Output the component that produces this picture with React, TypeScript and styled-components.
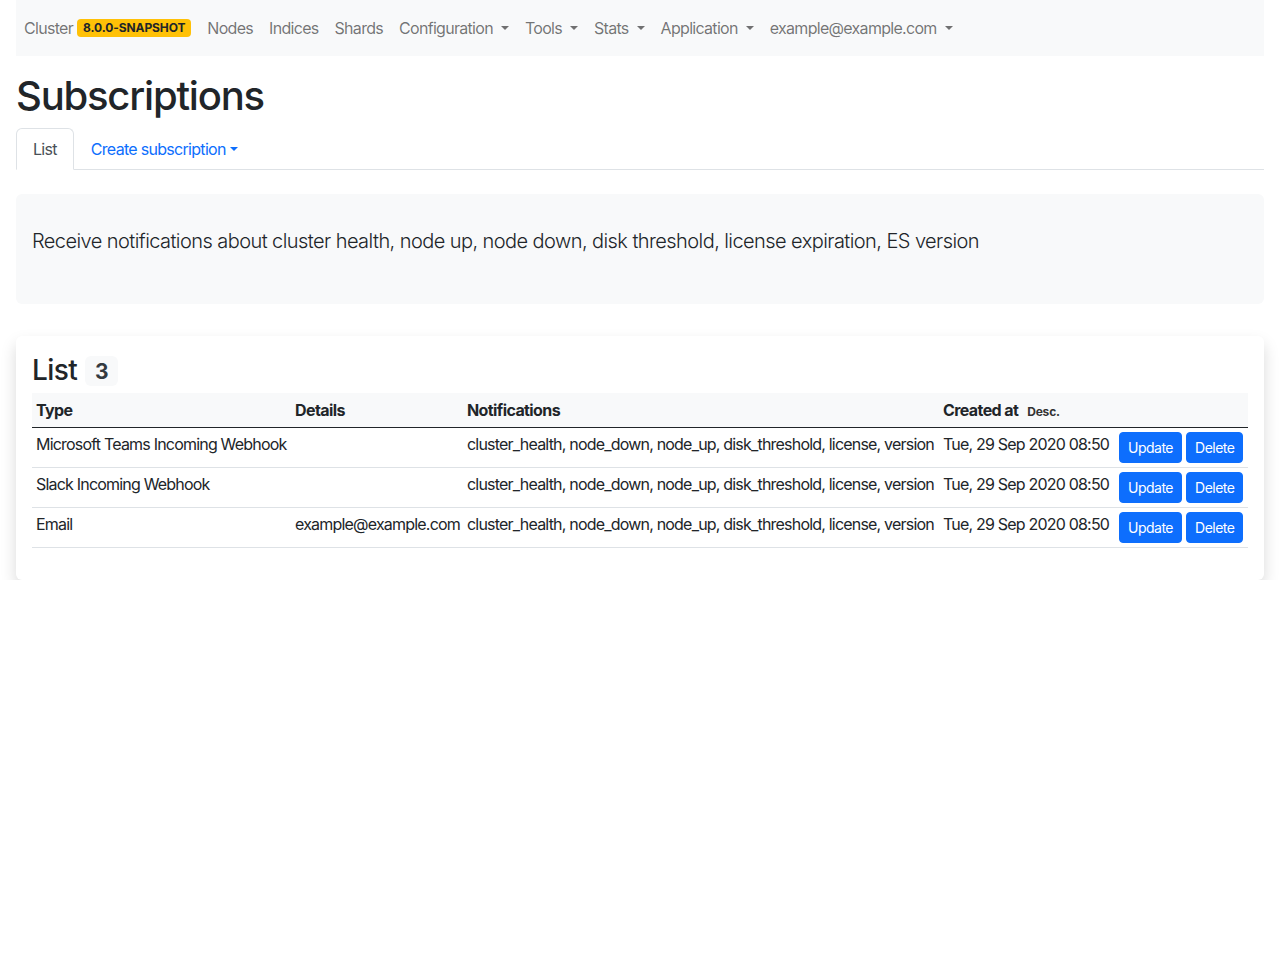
import * as React from 'react';
import styled, { createGlobalStyle } from 'styled-components';

const GlobalStyle = createGlobalStyle`
  * { box-sizing: border-box; }
  body {
    margin: 0;
    font-family: Inter, "Noto Sans", "Liberation Sans", sans-serif;
    font-size: 16px;
    line-height: 1.5;
    color: #212529;
    background: #fff;
  }
`;

const Page = styled.div`
  padding: 0 16px;
`;

const Navbar = styled.nav`
  display: flex;
  align-items: center;
  background-color: #f8f9fa;
  padding: 8px 0;
`;

const NavLink = styled.a`
  display: flex;
  align-items: center;
  padding: 8px;
  color: rgba(0, 0, 0, 0.55);
  text-decoration: none;
  font-size: 16px;
  line-height: 24px;
  letter-spacing: -0.7px;
`;

const Caret = styled.span`
  display: inline-block;
  margin-left: 0.5em;
  width: 0;
  height: 0;
  border-top: 0.3em solid currentColor;
  border-right: 0.3em solid transparent;
  border-left: 0.3em solid transparent;
  vertical-align: middle;
`;

const VersionBadge = styled.span`
  margin-left: 4px;
  padding: 3px 6px;
  background-color: #ffc107;
  color: #212529;
  font-size: 12px;
  font-weight: 700;
  line-height: 12px;
  letter-spacing: -0.1px;
  border-radius: 4px;
`;

const Title = styled.h1`
  margin: 16px 0 8px;
  font-size: 40px;
  font-weight: 500;
  line-height: 1.2;
  letter-spacing: -1.2px;
`;

const Tabs = styled.ul`
  display: flex;
  list-style: none;
  margin: 0;
  padding: 0;
  border-bottom: 1px solid #dee2e6;
`;

const Tab = styled.li<{ $active?: boolean }>`
  margin-bottom: -1px;
  a {
    display: flex;
    align-items: center;
    padding: 8px 16px;
    border: 1px solid transparent;
    border-color: ${(p) => (p.$active ? '#dee2e6 #dee2e6 #fff' : 'transparent')};
    border-top-left-radius: 6px;
    border-top-right-radius: 6px;
    background: ${(p) => (p.$active ? '#fff' : 'transparent')};
    color: ${(p) => (p.$active ? '#495057' : '#0d6efd')};
    text-decoration: none;
    letter-spacing: -0.7px;
  }
`;

const TabCaret = styled(Caret)`
  margin-left: 0.25em;
`;

const Intro = styled.div`
  margin-top: 24px;
  padding: 32px 16px;
  background-color: #f8f9fa;
  border-radius: 6px;
  p {
    margin: 0 0 16px;
    font-size: 20px;
    font-weight: 300;
    line-height: 30px;
    letter-spacing: -0.57px;
  }
`;

const Card = styled.div`
  margin-top: 32px;
  padding: 16px;
  background: #fff;
  border-radius: 6px;
  box-shadow: 0 8px 16px rgba(0, 0, 0, 0.15);
`;

const CardTitle = styled.h3`
  display: flex;
  align-items: center;
  margin: 0 0 5px;
  padding-top: 2px;
  font-size: 28px;
  font-weight: 500;
  line-height: 1.2;
  letter-spacing: -0.6px;
`;

const CountBadge = styled.span`
  margin-left: 8px;
  padding: 5px 10px 4px;
  background-color: #f8f9fa;
  color: #343a40;
  font-size: 21px;
  font-weight: 700;
  line-height: 21px;
  border-radius: 6px;
`;

const Table = styled.table`
  width: 100%;
  border-collapse: collapse;
  table-layout: fixed;
  margin-bottom: 16px;
  letter-spacing: -0.8px;
  th, td {
    padding: 4px;
    text-align: left;
    white-space: nowrap;
    vertical-align: top;
    line-height: 24px;
  }
  thead tr {
    background-color: #f8f9fa;
    border-bottom: 1px solid #212529;
  }
  th {
    padding: 5px 4px 3px;
    font-weight: 700;
    letter-spacing: -0.6px;
  }
  tbody tr {
    border-bottom: 1px solid #dee2e6;
  }
`;

const SortHint = styled.small`
  margin-left: 9px;
  font-size: 12px;
  font-weight: 700;
  letter-spacing: -0.2px;
  color: #333;
`;

const Actions = styled.div`
  display: flex;
  gap: 4px;
`;

const Button = styled.button`
  padding: 4px 8px;
  border: 1px solid #0d6efd;
  border-radius: 4px;
  background-color: #0d6efd;
  color: #fff;
  font-family: inherit;
  font-size: 14px;
  line-height: 21px;
  letter-spacing: -0.5px;
  cursor: pointer;
`;

const rows = [
  { type: 'Microsoft Teams Incoming Webhook', details: '' },
  { type: 'Slack Incoming Webhook', details: '' },
  { type: 'Email', details: 'example@example.com' },
];

const notifications = 'cluster_health, node_down, node_up, disk_threshold, license, version';

export default function App() {
  return (
    <Page>
      <GlobalStyle />
      <Navbar>
        <NavLink href="#">
          Cluster <VersionBadge>8.0.0-SNAPSHOT</VersionBadge>
        </NavLink>
        <NavLink href="#">Nodes</NavLink>
        <NavLink href="#">Indices</NavLink>
        <NavLink href="#">Shards</NavLink>
        <NavLink href="#">Configuration<Caret /></NavLink>
        <NavLink href="#">Tools<Caret /></NavLink>
        <NavLink href="#">Stats<Caret /></NavLink>
        <NavLink href="#">Application<Caret /></NavLink>
        <NavLink href="#">example@example.com<Caret /></NavLink>
      </Navbar>

      <Title>Subscriptions</Title>

      <Tabs>
        <Tab $active><a href="#">List</a></Tab>
        <Tab><a href="#">Create subscription<TabCaret /></a></Tab>
      </Tabs>

      <Intro>
        <p>Receive notifications about cluster health, node up, node down, disk threshold, license expiration, ES version</p>
      </Intro>

      <Card>
        <CardTitle>
          List <CountBadge>3</CountBadge>
        </CardTitle>
        <Table>
          <colgroup>
            <col style={{ width: 259 }} />
            <col style={{ width: 172 }} />
            <col style={{ width: 476 }} />
            <col style={{ width: 176 }} />
            <col />
          </colgroup>
          <thead>
            <tr>
              <th>Type</th>
              <th>Details</th>
              <th>Notifications</th>
              <th>Created at<SortHint>Desc.</SortHint></th>
              <th></th>
            </tr>
          </thead>
          <tbody>
            {rows.map((r) => (
              <tr key={r.type}>
                <td>{r.type}</td>
                <td>{r.details}</td>
                <td>{notifications}</td>
                <td>Tue, 29 Sep 2020 08:50</td>
                <td>
                  <Actions>
                    <Button>Update</Button>
                    <Button>Delete</Button>
                  </Actions>
                </td>
              </tr>
            ))}
          </tbody>
        </Table>
      </Card>
    </Page>
  );
}
